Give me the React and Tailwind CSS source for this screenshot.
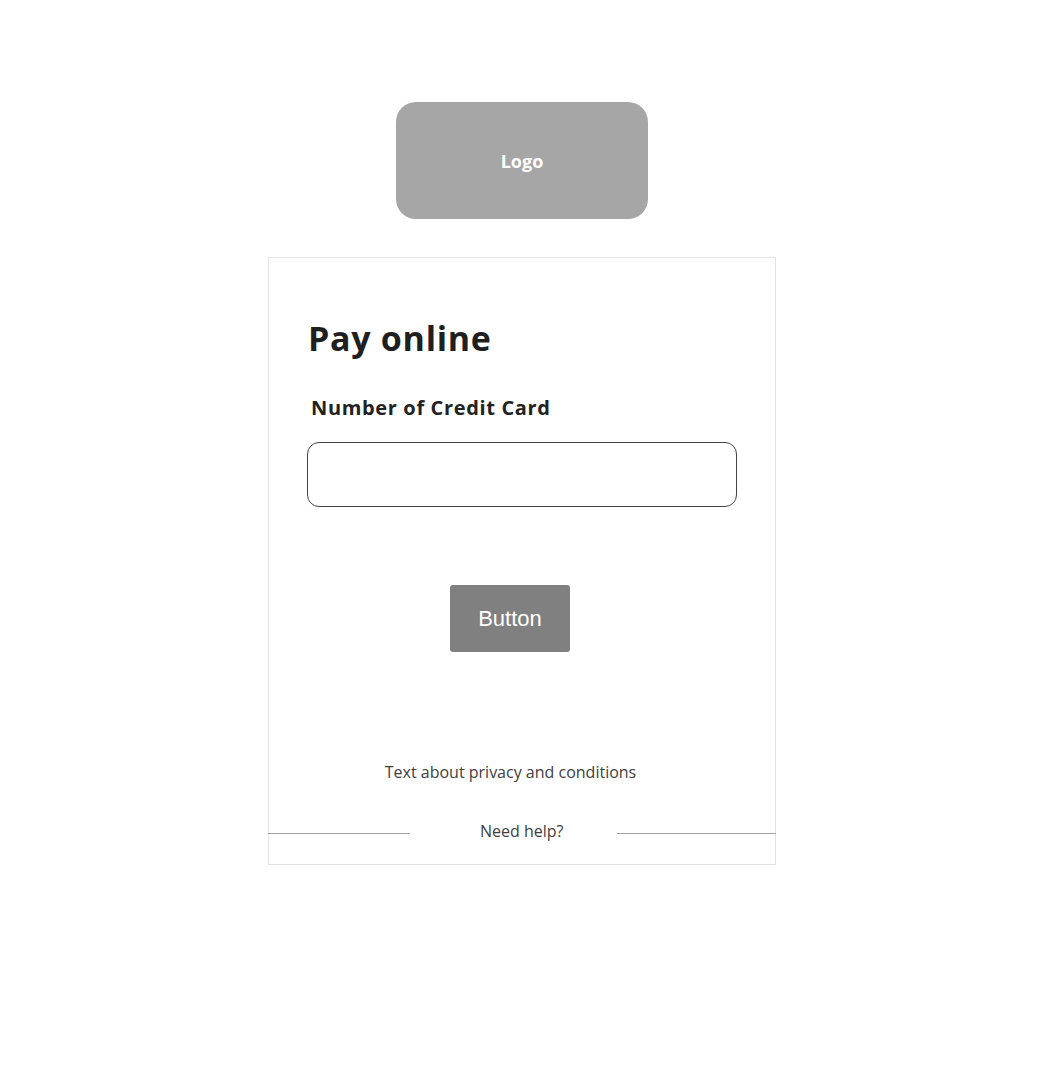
export default function App() {
  const font = { fontFamily: '"Open Sans", sans-serif' };
  return (
    <div className="min-h-[1080px] w-full bg-white pt-[102px]" style={font}>
      <div className="mx-auto flex h-[117px] w-[252px] items-center justify-center rounded-[20px] bg-[#a6a6a6]">
        <span className="text-[18px] font-bold leading-none text-white">Logo</span>
      </div>
      <div className="mx-auto mt-[38px] w-[508px] border border-[#e3e3e3] bg-white">
        <div className="px-[38px] pt-[63px]">
          <h1 className="pl-[1px] text-[34px] font-bold leading-none tracking-[0.7px] text-[#1f1f1f]">Pay online</h1>
          <div className="mt-[43px] pl-[4px] text-[20px] font-bold leading-none tracking-[0.65px] text-[#222]">
            Number of Credit Card
          </div>
          <input
            type="text"
            className="mt-[24px] block h-[65px] w-full rounded-[12px] border border-[#444] bg-white px-4 outline-none"
          />
          <div className="mt-[78px] pl-[143px]">
            <button
              className="flex h-[67px] w-[120px] items-center justify-center rounded-[3px] bg-[#808080] pt-[1px] text-[22px] leading-none text-white"
              style={{ fontFamily: '"Liberation Sans", Arial, sans-serif' }}
            >
              Button
            </button>
          </div>
          <div className="mt-[112px] pr-[23px] text-center text-[16px] leading-none text-[#404040]">
            Text about privacy and conditions
          </div>
        </div>
        <div className="-mx-px mt-[43px] flex h-[16px] items-center">
          <div className="mt-[4px] h-px w-[142px] bg-[#a0a0a0]" />
          <span className="ml-[70px] text-[16px] leading-none text-[#404040]">Need help?</span>
          <div className="ml-[53px] mt-[4px] h-px flex-1 bg-[#a0a0a0]" />
        </div>
        <div className="h-[25px]" />
      </div>
    </div>
  );
}
